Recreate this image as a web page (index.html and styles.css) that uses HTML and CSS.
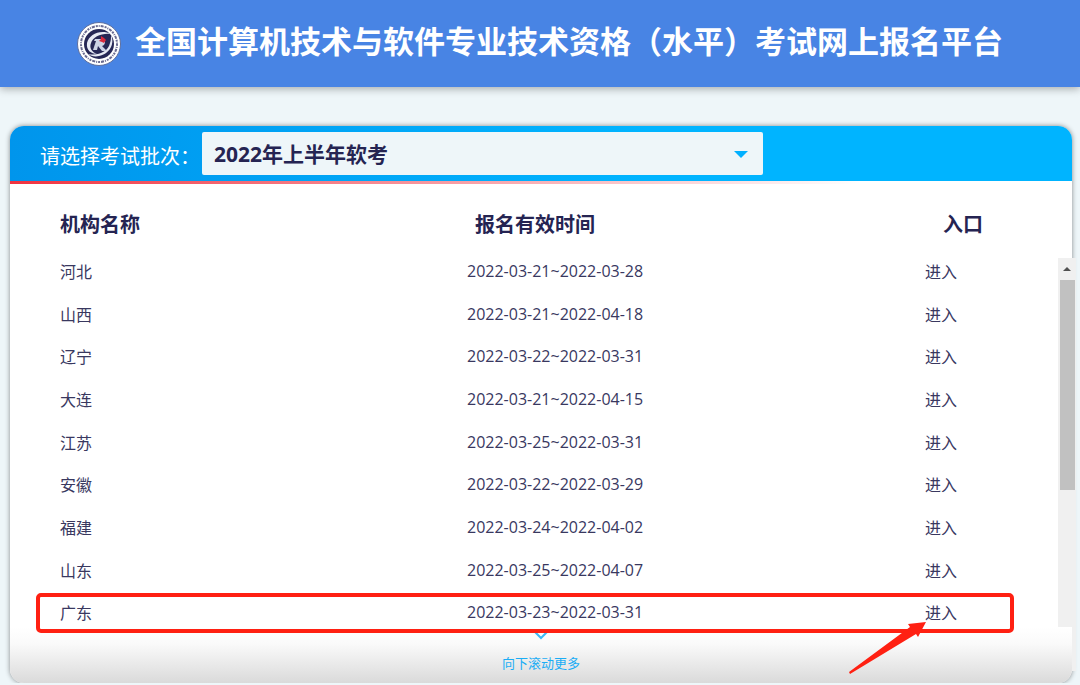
FILE: index.html
```html
<!doctype html>
<html lang="zh-CN">
<head>
	<meta charset="UTF-8">
	<meta name="viewport" content="width=device-width, initial-scale=1">
	<title>全国计算机技术与软件专业技术资格（水平）考试网上报名平台</title>

	<link rel="stylesheet" href="styles.css">
</head>
<body>
	<header class="site-header">
		<svg class="logo" viewBox="0 0 44 44" aria-hidden="true">
			<circle cx="22" cy="22" r="21.5" fill="#fff" stroke="#5e6f9e" stroke-width="1"/>
			<circle cx="22" cy="22" r="18" fill="none" stroke="#6a6b90" stroke-width="2" stroke-dasharray="2 1 1 1 3 1"/>
			<circle cx="22" cy="22" r="15" fill="#262755"/>
			<path d="M34 12C24 7 12 12 10 21c-1 7 4 11 10 11-5-2-8-6-6-11 2-6 10-10 20-9z" fill="#e6e9f3"/>
			<path d="M34 13c4 8-1 19-12 21-4 1-8 0-11-2 10 2 20-2 22-11 1-3 1-5 1-8z" fill="#e6e9f3"/>
			<path d="M18 17h7c4 0 4 6 0 7l5 5h-5l-4-5-1 4h-4l3-9h-2z" fill="#cdd3e6"/>
			<path d="M24 14l3 2 2 2-2 3-2-1-3-1 2-2z" fill="#d8283c"/>
		</svg>
		<h1>全国计算机技术与软件专业技术资格（水平）考试网上报名平台</h1>
	</header>

	<main class="panel">
		<div class="batch-bar">
			<label for="batch">请选择考试批次：</label>
			<div class="batch-select">
				<select id="batch">
					<option>2022年上半年软考</option>
				</select>
				<svg class="caret" viewBox="0 0 14 7" aria-hidden="true"><path d="M0 0h14L7 7z"/></svg>
			</div>
		</div>

		<div class="panel-body">
			<table class="orgs">
				<thead>
					<tr><th>机构名称</th><th class="time">报名有效时间</th><th class="entry">入口</th></tr>
				</thead>
				<tbody>
					<tr><td>河北</td><td>2022-03-21~2022-03-28</td><td><a href="#">进入</a></td></tr>
					<tr><td>山西</td><td>2022-03-21~2022-04-18</td><td><a href="#">进入</a></td></tr>
					<tr><td>辽宁</td><td>2022-03-22~2022-03-31</td><td><a href="#">进入</a></td></tr>
					<tr><td>大连</td><td>2022-03-21~2022-04-15</td><td><a href="#">进入</a></td></tr>
					<tr><td>江苏</td><td>2022-03-25~2022-03-31</td><td><a href="#">进入</a></td></tr>
					<tr><td>安徽</td><td>2022-03-22~2022-03-29</td><td><a href="#">进入</a></td></tr>
					<tr><td>福建</td><td>2022-03-24~2022-04-02</td><td><a href="#">进入</a></td></tr>
					<tr><td>山东</td><td>2022-03-25~2022-04-07</td><td><a href="#">进入</a></td></tr>
					<tr><td>广东</td><td>2022-03-23~2022-03-31</td><td><a href="#">进入</a></td></tr>
				</tbody>
			</table>
			<div class="scrollbar" aria-hidden="true">
				<svg class="scroll-up" viewBox="0 0 8 4"><path d="M4 0l4 4H0z"/></svg>
				<div class="scroll-thumb"></div>
			</div>
		</div>

		<!-- fades over the end of the list -->
		<div class="more">
			<svg class="chevron" viewBox="0 0 16 10" aria-hidden="true"><path d="M1 1l7 7 7-7"/></svg>
			<span>向下滚动更多</span>
		</div>

		<div class="mark-box"></div>
		<svg class="mark-arrow" viewBox="0 0 78 52" aria-hidden="true">
			<path d="M0 50L61 5 59 2 77 0 69 15 67 12 1 52z"/>
		</svg>
	</main>
</body>
</html>
```

FILE: styles.css
```css
* {
	box-sizing: border-box;
}

body {
	margin: 0;
	background: #eef6f9;
	color: #252452;
	font-family: "Open Sans", "Noto Sans CJK SC", sans-serif;
	font-size: 16px;
}

.site-header {
	display: flex;
	align-items: center;
	justify-content: center;
	gap: 14px;
	height: 87px;
	background: #4884e4;
	box-shadow: 0 2px 8px rgba(0, 0, 0, 0.3);
}

.logo {
	flex: none;
	width: 44px;
	height: 44px;
}

h1 {
	margin: 0;
	padding-bottom: 8px;
	color: #fff;
	font-family: "Noto Sans CJK SC", sans-serif;
	font-size: 31px;
	line-height: 44px;
	font-weight: bold;
	white-space: nowrap;
}

.panel {
	position: relative;
	margin: 39px 8px 0 10px;
	border-radius: 14px;
	background: #fff;
	box-shadow: 0 0 5px rgba(0, 0, 0, 0.45);
}

.batch-bar {
	display: flex;
	align-items: center;
	height: 58px;
	padding: 0 0 3px 30px;
	border-radius: 14px 14px 0 0;
	background:
		linear-gradient(90deg, #f03340, #fff 80%) bottom / 100% 3px no-repeat,
		linear-gradient(90deg, #0095ec, #00b4ff 60%);
}

.batch-bar label {
	width: 162px;
	padding-top: 4px;
	color: #fff;
	font-size: 20px;
	white-space: nowrap;
}

.batch-select {
	position: relative;
	width: 60%;
	max-width: 561px;
}

.batch-select select {
	display: block;
	width: 100%;
	height: 43px;
	padding: 0 12px;
	border: 0;
	border-radius: 2px;
	background: #eef6f9;
	color: #252452;
	font: bold 21px "Open Sans", "Noto Sans CJK SC", sans-serif;
	appearance: none;
}

.caret {
	position: absolute;
	top: 19px;
	right: 15px;
	width: 14px;
	height: 7px;
	fill: #00b0ff;
	pointer-events: none;
}

.panel-body {
	display: flex;
	align-items: flex-start;
	height: 499px;
}

.orgs {
	flex: 1;
	width: 100%;
	table-layout: fixed;
	border-collapse: collapse;
}

.orgs th,
.orgs td {
	height: 43px;
	padding: 0;
	text-align: left;
}

.orgs tr:nth-child(3n) td {
	height: 42px;
}

.orgs td {
	color: #39385f;
}

.orgs th {
	height: 65px;
	padding-top: 14px;
	font-size: 20px;
}

.orgs th:first-child,
.orgs td:first-child {
	padding-left: 50px;
}

.orgs .time {
	width: 458px;
	padding-left: 8px;
}

.orgs .entry {
	width: 133px;
	padding-left: 18px;
}

.orgs a {
	color: inherit;
	text-decoration: none;
}

.scrollbar {
	display: flex;
	flex: none;
	flex-direction: column;
	align-items: center;
	width: 18px;
	height: 413px;
	margin: 74px -4px 0 0;
	background: #f0f0f0;
}

.scroll-up {
	width: 8px;
	height: 4px;
	margin: 9px 0;
	fill: #505050;
}

.scroll-thumb {
	width: 15px;
	height: 210px;
	background: #c1c1c1;
}

.more {
	position: absolute;
	right: 0;
	bottom: 0;
	left: 0;
	display: flex;
	flex-direction: column;
	align-items: center;
	gap: 13px;
	height: 56px;
	padding-top: 3px;
	border-radius: 0 0 14px 14px;
	background: linear-gradient(#fff, #fafafa 30%, #dadada);
	color: #1badf5;
	font-size: 13px;
	line-height: 20px;
}

.chevron {
	flex: none;
	width: 16px;
	height: 10px;
	fill: none;
	stroke: #3bb8f5;
	stroke-width: 2;
}

/* red marks over the row to pick */
.mark-box {
	position: absolute;
	top: 467px;
	right: 58px;
	left: 26px;
	height: 40px;
	border: 4px solid #ff2012;
	border-radius: 5px;
}

.mark-arrow {
	position: absolute;
	top: 496px;
	right: 145px;
	width: 78px;
	height: 52px;
	fill: #ff2012;
}
```
